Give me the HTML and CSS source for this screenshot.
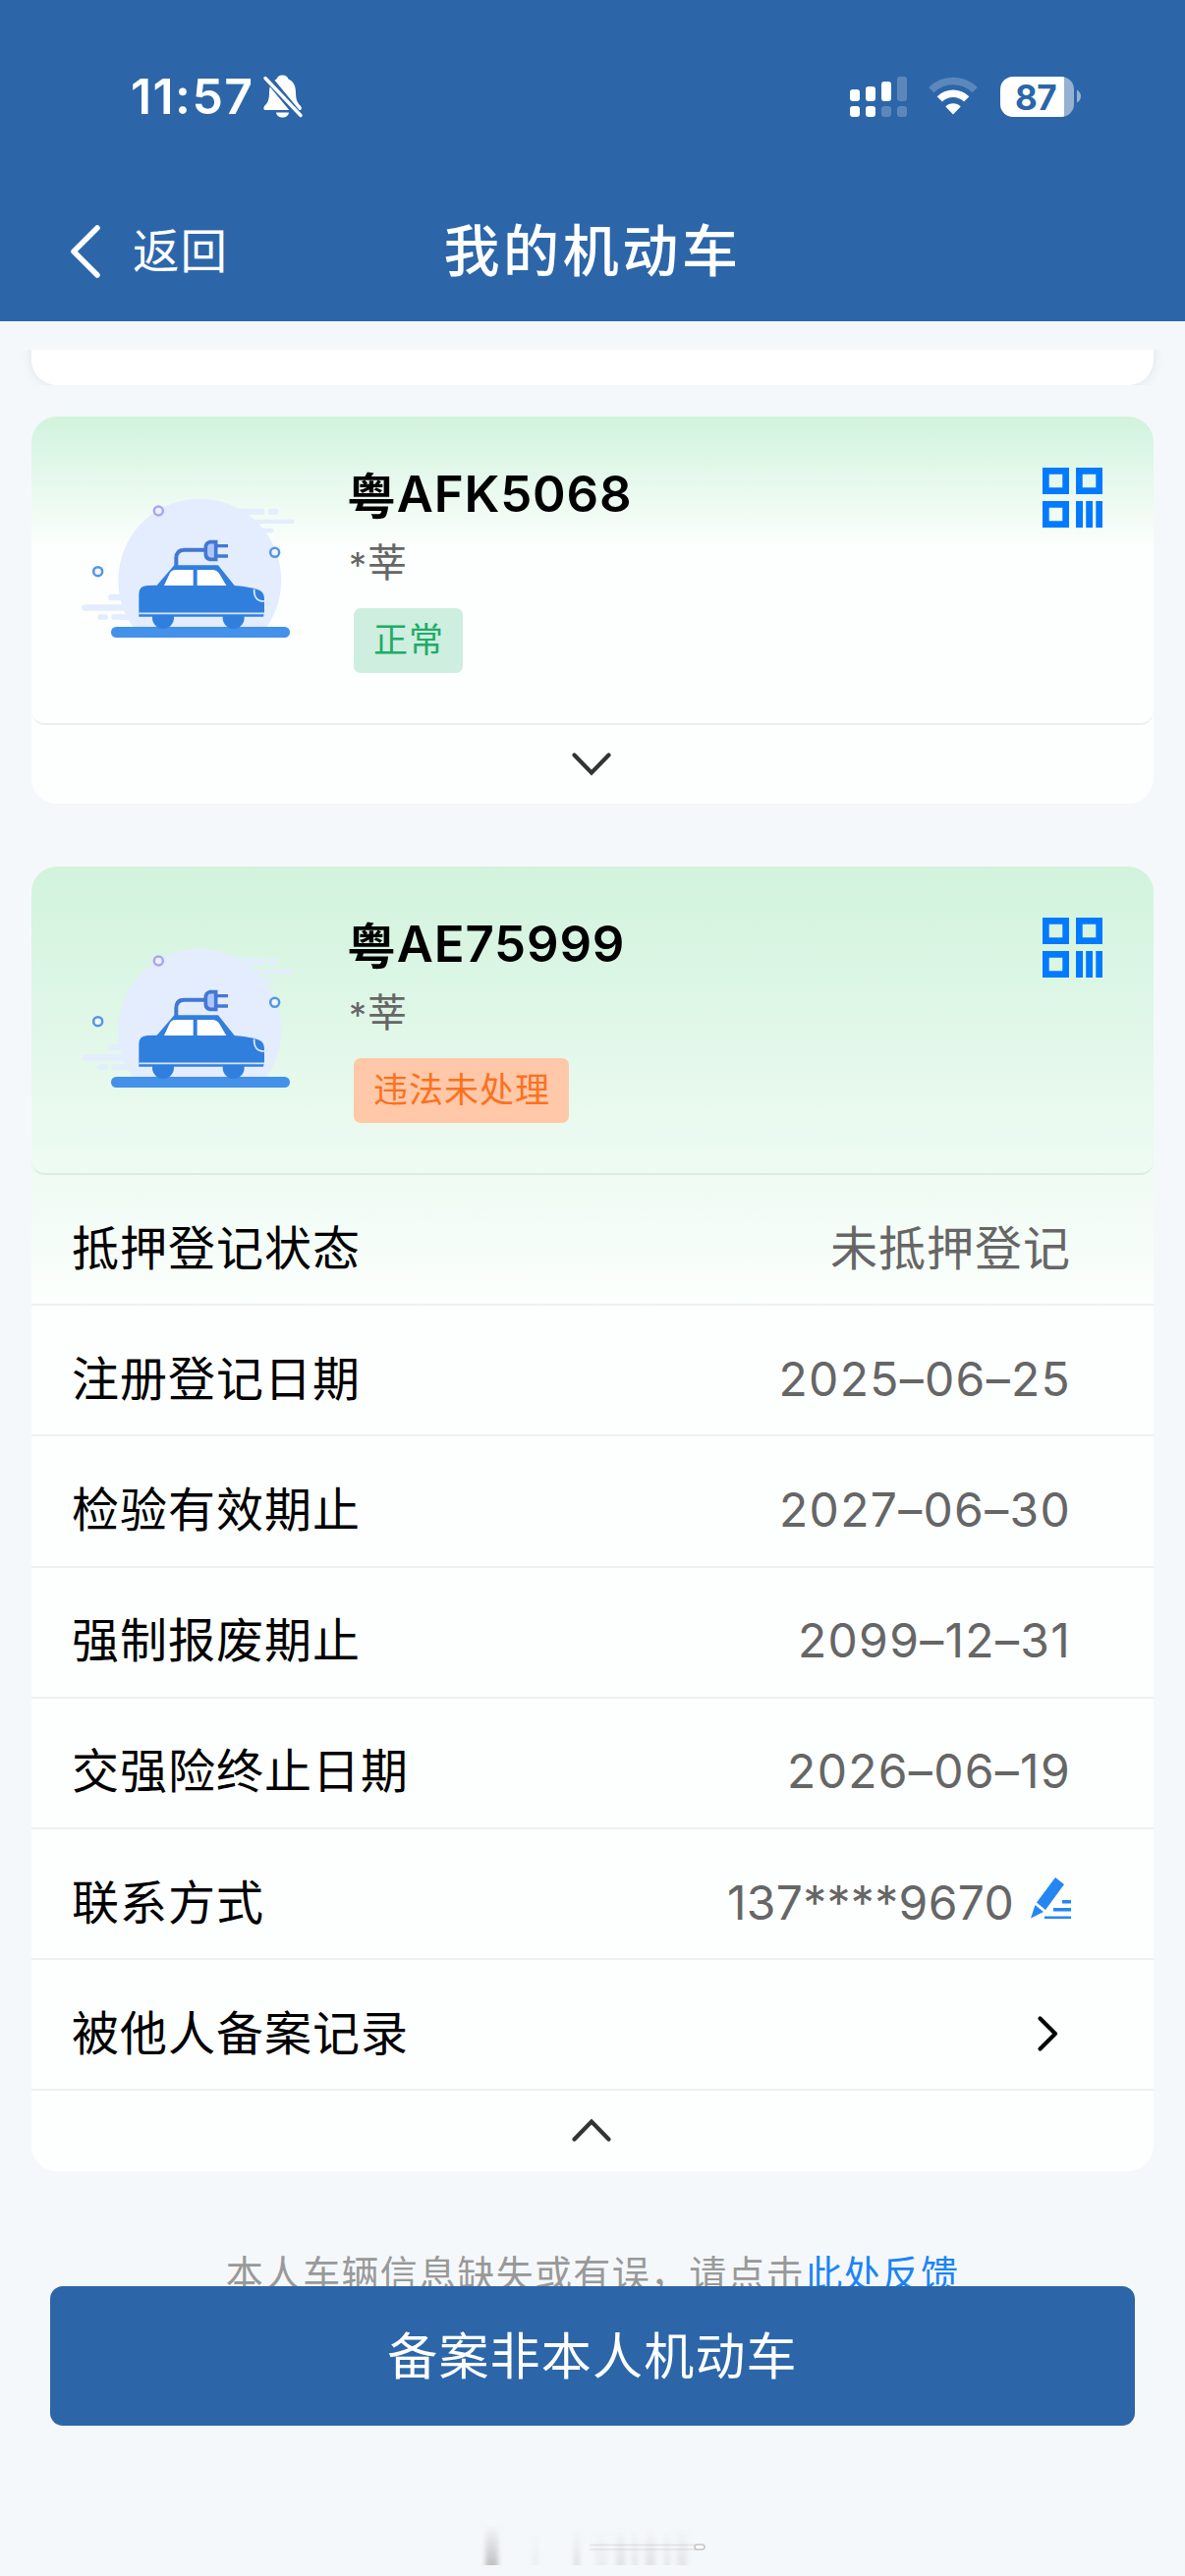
FILE: index.html
```html
<!DOCTYPE html>
<html lang="zh-CN">
<head>
<meta charset="utf-8">
<title>我的机动车</title>
<link rel="stylesheet" href="styles.css">
</head>
<body>
<svg class="defs" aria-hidden="true">
  <symbol id="ev-car" viewBox="0 0 720 600">
    <path d="M225.500 534A249 249 0 1 1 634.500 534Z" fill="#e3edfe"/>
    <g fill="#e3edfe">
      <rect x="530" y="173" width="98" height="19" rx="9"/><rect x="638" y="173" width="32" height="19" rx="9"/>
      <rect x="570" y="206" width="148" height="13" rx="6"/><rect x="600" y="233" width="56" height="14" rx="7"/>
      <rect x="150" y="435" width="80" height="19" rx="9"/><rect x="70" y="466" width="150" height="19" rx="9"/>
      <rect x="118" y="496" width="32" height="17" rx="8"/><rect x="160" y="496" width="70" height="17" rx="8"/>
    </g>
    <circle cx="304" cy="180" r="13.500" fill="#eef0ff" stroke="#a9a4f3" stroke-width="7.500"/>
    <circle cx="119" cy="365" r="13.500" fill="#eff6ff" stroke="#5794e4" stroke-width="7.500"/>
    <circle cx="659" cy="307" r="13.500" fill="#eff6ff" stroke="#5794e4" stroke-width="7.500"/>
    <path d="M358 350V325Q358 299 382 299H446" fill="none" stroke="#4377d3" stroke-width="12"/>
    <path d="M480 287H516M480 318H516" stroke="#4377d3" stroke-width="10"/>
    <path d="M479 275H460Q448 278 448 292V312Q448 325 460 328H479Z" fill="#adc6fa" stroke="#4377d3" stroke-width="11"/>
    <rect x="159" y="534" width="546" height="33" rx="16" fill="#4391e9"/>
    <circle cx="318" cy="507" r="33" fill="#317fdd"/><circle cx="533" cy="507" r="33" fill="#317fdd"/>
    <path d="M244 503V434Q244 409 270 408L299 407L352 346H486L536 408Q600 414 618 426Q627 434 627 450V490L624 503Z" fill="#317fdd"/>
    <path d="M321 408L338 371Q344 360 355 360H410V408ZM422 360H471Q482 361 488 369L511 408H422Z" fill="#fff"/>
    <path d="M596 419Q594 456 627 456" fill="none" stroke="#e3edfe" stroke-width="5"/>
    <path d="M244 493H627" stroke="#d5e5fc" stroke-width="5"/>
  </symbol>
  <symbol id="qr" viewBox="0 0 61 61">
    <path fill="#007aff" fill-rule="evenodd" d="M0 0H27V27H0ZM6.7 6.7V20.3H20.3V6.7ZM34 0H61V27H34ZM40.7 6.7V20.3H54.3V6.7ZM0 34H27V61H0ZM6.7 40.7V54.3H20.3V40.7ZM34 34H41V61H34ZM44.2 34H51V61H44.2ZM54.3 34H61V61H54.3Z"/>
  </symbol>
  <symbol id="chevron-down" viewBox="0 0 40 24"><path d="M2.5 2.5L20 20.5L37.5 2.5" fill="none" stroke="#333" stroke-width="4.2" stroke-linecap="round"/></symbol>
</svg>

<header class="header">
  <div class="status">
    <div class="status-left">
      <span class="time">11:57</span>
      <svg class="bell" viewBox="0 0 40 44">
        <path d="M19.500 0.500C23 0.500 25 2.500 25.500 4.500C31 7 33 12 33 18C33 26 35 29 38 32C39.500 34 39 36 37 36H2C0 36 0 34 1 32C4.500 28.500 6 26 6 18C6 12 8 7 13.500 4.500C14 2.500 16 0.500 19.500 0.500Z" fill="#fff"/>
        <path d="M13 38.500H26C25.500 42 23 43.500 19.500 43.500C16 43.500 13.500 42 13 38.500Z" fill="#fff"/>
        <path d="M-1.500 -0.500L36 45" stroke="#2c66a9" stroke-width="8" transform="translate(2 -1)"/>
        <path d="M2 3.500L38 41.500" stroke="#fff" stroke-width="3.400" stroke-linecap="round"/>
      </svg>
    </div>
    <div class="status-right">
      <svg class="signal" viewBox="0 0 58 41">
        <g fill="#fff"><rect y="13" width="10" height="12" rx="3"/><rect x="16" y="10" width="10" height="15" rx="3"/><rect x="32" y="5" width="10" height="20" rx="3"/><rect y="30" width="10" height="11" rx="3"/><rect x="16" y="30" width="10" height="11" rx="3"/></g>
        <g fill="#5c87bb"><rect x="48" width="10" height="25" rx="3"/><rect x="32" y="30" width="10" height="11" rx="3"/><rect x="48" y="30" width="10" height="11" rx="3"/></g>
      </svg>
      <svg class="wifi" viewBox="0 0 50 38">
        <path d="M2.800 12.600A31.500 31.500 0 0 1 47.200 12.600" fill="none" stroke="#5c87bb" stroke-width="7.500"/>
        <path d="M11.300 21.800A19.500 19.500 0 0 1 38.700 21.800" fill="none" stroke="#fff" stroke-width="7.500"/>
        <path d="M25 37.500L17.300 29.500A11 11 0 0 1 32.700 29.500Z" fill="#fff"/>
      </svg>
      <div class="battery"><span class="battery-level">87</span></div>
      <svg class="battery-cap" viewBox="0 0 4 14"><path d="M0 0.500Q4 3 4 7T0 13.500Z" fill="#96b1d2"/></svg>
    </div>
  </div>
  <div class="nav">
    <svg class="back-icon" viewBox="0 0 30 54"><path d="M27 3L3 27L27 51" fill="none" stroke="#fff" stroke-width="5.500" stroke-linecap="round" stroke-linejoin="round"/></svg>
    <span class="back">返回</span>
    <h1 class="title">我的机动车</h1>
  </div>
</header>

<main class="list">
  <div class="peek"><div class="peek-card"></div></div>

  <section class="card">
    <div class="card-head">
      <svg class="car"><use href="#ev-car"/></svg>
      <div class="info">
        <div class="plate"><span class="prov">粤</span>AFK5068</div>
        <div class="owner"><span class="mask">*</span>莘</div>
        <span class="badge ok">正常</span>
      </div>
      <svg class="qr"><use href="#qr"/></svg>
    </div>
    <div class="toggle"><svg class="chev"><use href="#chevron-down"/></svg></div>
  </section>

  <section class="card">
    <div class="card-head">
      <svg class="car"><use href="#ev-car"/></svg>
      <div class="info">
        <div class="plate"><span class="prov">粤</span>AE75999</div>
        <div class="owner"><span class="mask">*</span>莘</div>
        <span class="badge warn">违法未处理</span>
      </div>
      <svg class="qr"><use href="#qr"/></svg>
    </div>
    <div class="row"><span>抵押登记状态</span><span class="value">未抵押登记</span></div>
    <div class="row"><span>注册登记日期</span><span class="value num">2025–06–25</span></div>
    <div class="row"><span>检验有效期止</span><span class="value num">2027–06–30</span></div>
    <div class="row"><span>强制报废期止</span><span class="value num">2099–12–31</span></div>
    <div class="row"><span>交强险终止日期</span><span class="value num">2026–06–19</span></div>
    <div class="row"><span>联系方式</span>
      <span class="contact"><span class="value num phone">137****9670</span>
        <svg class="pen" viewBox="0 0 41 42"><path fill="#2586f3" d="M25 0L34 7L15 33L6 25.500ZM4.500 28L13 35L0 41.500ZM32 23H41V26.500H32ZM23 31H41V34.500H23ZM14 39.500H41V42H14Z"/></svg>
      </span>
    </div>
    <div class="row"><span>被他人备案记录</span><svg class="arrow" viewBox="0 0 20 36"><path d="M2.500 2.500L18 18L2.500 33.500" fill="none" stroke="#000" stroke-width="4.200" stroke-linecap="round" stroke-linejoin="round"/></svg></div>
    <div class="toggle toggle-open"><svg class="chev up"><use href="#chevron-down"/></svg></div>
  </section>

  <p class="feedback">本人车辆信息缺失或有误，请点击<a class="link">此处反馈</a></p>
</main>

<footer class="footer">
  <button class="submit">备案非本人机动车</button>
  <svg class="smudge" viewBox="0 0 230 46">
    <defs>
      <linearGradient id="fade" x2="0" y2="1"><stop offset="0" stop-color="#aaa" stop-opacity="0"/><stop offset="1" stop-color="#aaa" stop-opacity=".7"/></linearGradient>
      <filter id="soft" x="-10%" y="-10%" width="120%" height="120%"><feGaussianBlur stdDeviation="2.5 .5"/></filter>
    </defs>
    <g filter="url(#soft)" fill="url(#fade)">
      <rect x="4" y="2" width="13" height="41"/><rect x="52" y="8" width="6" height="35" opacity=".2"/><rect x="94" y="4" width="6" height="39" opacity=".45"/>
      <rect x="116" y="6" width="12" height="37" opacity=".2"/><rect x="137" y="4" width="9" height="39" opacity=".4"/><rect x="153" y="4" width="6" height="39" opacity=".35"/><rect x="167" y="4" width="10" height="39" opacity=".4"/><rect x="186" y="4" width="6" height="39" opacity=".35"/><rect x="199" y="4" width="10" height="39" opacity=".35"/>
    </g>
    <path d="M110 22.500H220M110 27H220" stroke="#aaa" stroke-opacity=".25" stroke-width="1.500"/>
    <rect x="217" y="22" width="10" height="5" rx="2.500" fill="#fff" stroke="#c4c4c4" stroke-width="1.500"/>
  </svg>
</footer>
</body>
</html>
```
FILE: styles.css
```css
* { box-sizing: border-box; }
body {
  margin: 0;
  position: relative;
  width: 1206px;
  height: 2622px;
  overflow: hidden;
  background: #f5f8fa;
  color: #000;
  font-family: Inter, "Noto Sans CJK SC", sans-serif;
}
svg { display: block; flex: none; overflow: visible; }
.defs { position: absolute; width: 0; height: 0; overflow: hidden; }

.header { height: 327px; background: #2c66a9; color: #fff; }
.status {
  height: 196px;
  padding: 0 106px 0 133px;
  display: flex;
  align-items: center;
  justify-content: space-between;
}
.status-left, .status-right { display: flex; align-items: center; }
.time { width: 135px; font-size: 50px; font-weight: 600; letter-spacing: 1.400px; line-height: 60px; white-space: nowrap; }
.bell { width: 40px; height: 44px; }
.signal { width: 58px; height: 41px; margin-right: 22px; }
.wifi { width: 50px; height: 38px; margin-right: 23px; }
.battery {
  width: 75px;
  height: 41px;
  border-radius: 13px;
  background: linear-gradient(90deg, #fff 65px, #96b1d2 65px);
  color: #2c66a9;
}
.battery-level { display: block; padding-left: 15px; font-size: 35px; font-weight: 700; line-height: 42px; letter-spacing: -0.5px; }
.battery-cap { width: 4px; height: 14px; margin-left: 3px; }

.nav { display: grid; grid-template-columns: 30px 1fr auto 1fr 30px; align-items: center; padding: 0 72px; height: 118px; }
.back-icon { width: 30px; height: 54px; }
.back { padding: 0 0 6px 33px; font-size: 47.500px; font-weight: 400; letter-spacing: 1px; }
.title { margin: 0; font-size: 57px; font-weight: 500; letter-spacing: 3.600px; line-height: 118px; padding-top: 1px; }

.list { display: flex; flex-direction: column; padding: 29px 32px 0; height: 2100px; overflow: hidden; }
.peek { height: 36px; margin: 0 -14px 32px; padding: 0 14px; overflow: hidden; flex: none; }
.peek-card { height: 96px; margin-top: -60px; border-radius: 26px; background: #fff; box-shadow: 0 0 12px rgba(0, 0, 0, .09); }

.card {
  flex: none;
  margin-bottom: 64px;
  border-radius: 26px;
  background: linear-gradient(#d1f3dc, #fdfffe 35%);
}
.card-head {
  display: flex;
  height: 314px;
  border-bottom: 2px solid rgba(60, 100, 90, .1);
  border-radius: 14px;
}
.car { width: 240px; height: 200px; margin: 36px 0 0 28px; }
.info { flex: 1; padding: 45px 0 0 53px; }
.plate { height: 66px; display: flex; align-items: center; font-size: 51px; font-weight: 600; letter-spacing: 0.800px; }
.prov { font-family: "Noto Sans CJK SC", sans-serif; font-size: 50px; font-weight: 700; }
.owner { height: 62px; display: flex; align-items: center; padding-left: 2px; margin-top: 7px; color: #666; font-size: 40px; line-height: 62px; }
.mask { width: 19px; padding-top: 3px; font-size: 36px; }
.badge { display: inline-block; height: 66px; margin: 15px 0 0 7px; padding: 0 18.500px 0 20px; border-radius: 7px; font-size: 35px; line-height: 64px; letter-spacing: 1px; }
.ok { background: #ceeee0; color: #1fac66; }
.warn { background: #ffc8a8; color: #fb7120; }
.qr { width: 61px; height: 61px; margin: 52px 52px 0 0; }

.row {
  display: flex;
  align-items: center;
  justify-content: space-between;
  height: 133.200px;
  padding: 10px 84px 0 41px;
  border-bottom: 2px solid rgba(60, 80, 80, .08);
  font-size: 48px;
  letter-spacing: 1px;
}
.value { color: #666; }
.num { padding-top: 7px; letter-spacing: 1.300px; }
.phone { letter-spacing: 0.300px; }
.contact { display: flex; align-items: center; gap: 17px; }
.pen { width: 41px; height: 42px; margin-top: -1px; }
.arrow { width: 20px; height: 36px; margin: 8px 14px 0 0; }
.toggle { height: 80px; display: flex; align-items: center; justify-content: center; padding-right: 2px; }
.toggle-open { height: 82px; padding-bottom: 2px; }
.chev { width: 40px; height: 24px; }
.up { transform: rotate(180deg); }

.feedback { margin: 10px 0 0; text-align: center; font-size: 38px; line-height: 60px; letter-spacing: 1.300px; color: #999; white-space: nowrap; }
.link { color: #1a84f6; }

.footer { position: absolute; left: 0; right: 0; top: 2327px; height: 295px; padding: 0 51px; background: #f5f8fa; }
.submit {
  display: block;
  width: 100%;
  height: 142px;
  padding: 0;
  border: 0;
  border-radius: 13px;
  background: #2c66a9;
  color: #fff;
  font: 400 51px/144px Inter, "Noto Sans CJK SC", sans-serif;
  letter-spacing: 1.200px;
}
.smudge { width: 230px; height: 46px; margin: 99px 0 0 439px; }
```
